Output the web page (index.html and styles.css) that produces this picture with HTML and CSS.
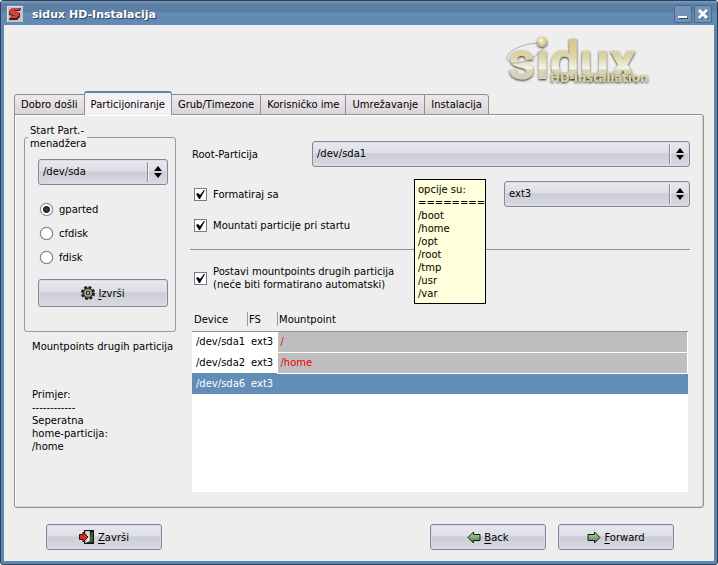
FILE: index.html
```html
<!DOCTYPE html>
<html lang="hr">
<head>
<meta charset="utf-8">
<title>sidux HD-Instalacija</title>
<link rel="stylesheet" href="styles.css">
</head>
<body>
<div class="window">
  <header class="titlebar">
    <svg class="app-icon" width="16" height="16" viewBox="0 0 16 16" aria-hidden="true">
      <rect width="16" height="16" fill="#c3c4ca"/>
      <path d="M0 16V0h16" fill="none" stroke="#e2e3e8" stroke-width="2"/>
      <path d="M2 5l3-3h9l-1 3H6l7 2v4l-3 3H2l1-3h6L2 9z" fill="#47191c"/>
      <path d="M2 4l3-2h8l-1 2H6l6 2v4l-3 2H3l1-2h4L3 8z" fill="#c8463c"/>
    </svg>
    <h1 class="title">sidux HD-Instalacija</h1>
    <button class="win-button" type="button" aria-label="Minimize">
      <svg width="18" height="18" viewBox="0 0 18 18"><path d="M5 13h9" stroke="#2f4a68" stroke-width="2"/><path d="M4 12h9" stroke="#fff" stroke-width="2"/></svg>
    </button>
    <button class="win-button" type="button" aria-label="Close">
      <svg width="18" height="18" viewBox="0 0 18 18"><path d="M6 6l8 8M14 6l-8 8" stroke="#2f4a68" stroke-width="2"/><path d="M5 5l8 8M13 5l-8 8" stroke="#fff" stroke-width="3"/></svg>
    </button>
  </header>

  <main class="content">
    <div class="banner">
      <svg class="logo" width="150" height="60" viewBox="0 0 150 60" role="img" aria-label="sidux HD-Installation">
        <defs>
          <linearGradient id="gold" x1="0" y1="8" x2="0" y2="52" gradientUnits="userSpaceOnUse">
            <stop offset="0" stop-color="#d3c88c"/><stop offset=".4" stop-color="#dcd4a4"/>
            <stop offset=".68" stop-color="#f7f4e6"/><stop offset=".7" stop-color="#d9d5b8"/><stop offset="1" stop-color="#d0cdbc"/>
          </linearGradient>
          <radialGradient id="ball" cx=".4" cy=".35"><stop offset="0" stop-color="#fffbe6"/><stop offset="1" stop-color="#d6c47c"/></radialGradient>
          <filter id="shade" x="-10%" y="-10%" width="120%" height="130%"><feDropShadow dx="0" dy="1" stdDeviation="1" flood-color="#222" flood-opacity="1"/></filter>
        </defs>
        <g filter="url(#shade)">
          <text class="wordmark" x="2" y="48" fill="url(#gold)">s&#x131;dux</text>
          <circle cx="36" cy="11" r="5" fill="url(#ball)"/>
        </g>
        <path d="M34 12C15 12-2 22 1 29c2 6 21 3 31-6 5-4 8-8 7-10" fill="none" stroke="#aaa" stroke-width="1"/>
        <text class="subtitle" x="44" y="51" filter="url(#shade)">HD-Installation</text>
      </svg>
    </div>

    <nav class="tabs" role="tablist">
      <button class="tab" role="tab" type="button">Dobro došli</button>
      <button class="tab selected" role="tab" type="button" aria-selected="true">Particijoniranje</button>
      <button class="tab" role="tab" type="button">Grub/Timezone</button>
      <button class="tab" role="tab" type="button">Korisničko ime</button>
      <button class="tab" role="tab" type="button">Umrežavanje</button>
      <button class="tab" role="tab" type="button">Instalacija</button>
    </nav>

    <section class="panel">
      <div class="side">
        <fieldset class="manager">
          <legend>Start Part.-<br>menadžera</legend>
          <div class="combo">
            <select aria-label="Disk"><option>/dev/sda</option></select>
            <svg class="arrows" width="8" height="12" viewBox="0 0 8 12"><path d="M0 5l4-5 4 5zM0 7h8l-4 5z"/></svg>
          </div>
          <div class="radios">
            <label class="choice"><input type="radio" name="tool" checked>gparted</label>
            <label class="choice"><input type="radio" name="tool">cfdisk</label>
            <label class="choice"><input type="radio" name="tool">fdisk</label>
          </div>
          <button class="button run" type="button">
            <svg width="14" height="14" viewBox="0 0 14 14"><circle cx="7" cy="7" r="5.5" fill="none" stroke="#1d1c19" stroke-width="3" stroke-dasharray="2.6 1.72"/><circle cx="7" cy="7" r="5" fill="#77746a" stroke="#1d1c19"/><circle cx="7" cy="7" r="3" fill="none" stroke="#b0ac9f"/><circle cx="7" cy="7" r="2" fill="#1d1c19"/><circle cx="7" cy="7" r="1" fill="#e8e8e8"/></svg>
            <span><u>I</u>zvrši</span>
          </button>
        </fieldset>
        <p class="note">Mountpoints drugih particija</p>
        <p class="note example">Primjer:<br>------------<br>Seperatna<br>home-particija:<br>/home</p>
      </div>

      <div class="main">
        <div class="row">
          <label class="row-label" for="root">Root-Particija</label>
          <div class="combo root">
            <select id="root"><option>/dev/sda1</option></select>
            <svg class="arrows" width="8" height="12" viewBox="0 0 8 12"><path d="M0 5l4-5 4 5zM0 7h8l-4 5z"/></svg>
          </div>
        </div>
        <div class="row format">
          <label class="choice"><input type="checkbox" checked>Formatiraj sa</label>
          <div class="combo fs">
            <select aria-label="Formatiraj sa"><option>ext3</option></select>
            <svg class="arrows" width="8" height="12" viewBox="0 0 8 12"><path d="M0 5l4-5 4 5zM0 7h8l-4 5z"/></svg>
          </div>
          <div class="tooltip" role="tooltip">opcije su:<br>========<br>/boot<br>/home<br>/opt<br>/root<br>/tmp<br>/usr<br>/var</div>
        </div>
        <label class="choice mount"><input type="checkbox" checked>Mountati particije pri startu</label>
        <hr class="rule">
        <label class="choice others"><input type="checkbox" checked><span>Postavi mountpoints drugih particija<br>(neće biti formatirano automatski)</span></label>
        <div class="list">
          <table class="mounts">
            <colgroup><col class="device"><col class="type"><col></colgroup>
            <thead><tr><th>Device</th><th>FS</th><th>Mountpoint</th></tr></thead>
            <tbody>
              <tr><td>/dev/sda1</td><td>ext3</td><td class="point">/</td></tr>
              <tr><td>/dev/sda2</td><td>ext3</td><td class="point">/home</td></tr>
              <tr class="current"><td>/dev/sda6</td><td>ext3</td><td></td></tr>
            </tbody>
          </table>
        </div>
      </div>
    </section>

    <footer class="actions">
      <button class="button" type="button">
        <svg width="16" height="14" viewBox="0 0 16 14"><path d="M5 0h10v14H5z" fill="#111"/><path d="M12 2h2v10l-4 1z" fill="#425c3a"/><path d="M6 1h5v10l-4 2H6z" fill="#bfc0ba"/><path d="M8 2h2v9l-2 1z" fill="#e4e4df"/><path d="M0.500 4.500H4V2l5 5-5 5V9.500H.5z" fill="#d52c1d" stroke="#3a0905"/></svg>
        <span><u>Z</u>avrši</span>
      </button>
      <div class="steps">
        <button class="button" type="button">
          <svg width="14" height="13" viewBox="0 0 14 13"><defs><linearGradient id="green" x1="0" y1="0" x2="0" y2="1"><stop offset="0" stop-color="#b9d6b0"/><stop offset="1" stop-color="#4c7d46"/></linearGradient></defs><path d="M1 6.500L6.500 1v2.500H13v6H6.500V12z" fill="url(#green)" stroke="#10200e"/></svg>
          <span><u>B</u>ack</span>
        </button>
        <button class="button" type="button">
          <svg width="14" height="13" viewBox="0 0 14 13"><path d="M13 6.500L7.500 1v2.500H1v6h6.500V12z" fill="url(#green)" stroke="#10200e"/></svg>
          <span><u>F</u>orward</span>
        </button>
      </div>
    </footer>
  </main>
</div>
</body>
</html>
```

FILE: styles.css
```css
* { box-sizing: border-box; }

body {
  margin: 0;
  background: #fff;
  color: #000;
  font: 10px/13px "DejaVu Sans", sans-serif;
}

button, select, input { font: inherit; color: inherit; margin: 0; }
p { margin: 0; }

.window {
  display: flex;
  flex-direction: column;
  min-height: 100vh;
  padding: 0 3px 3px;
  border: 1px solid #2b4059;
  border-radius: 3px;
  background: #5b87b3;
}

/* Title bar */
.titlebar {
  display: flex;
  align-items: center;
  gap: 2px;
  height: 24px;
  margin: 0 -3px;
  padding: 2px 5px 0 6px;
  background: linear-gradient(#7d9dbe 0, #5e80a4 3px, #5b7ea2 11px, #658bb3 12px, #618ab3 100%);
}

.title {
  flex: 1;
  margin: 0 0 0 7px;
  color: #fff;
  font-size: 11px;
  font-weight: bold;
  text-shadow: 1px 1px 1px #29415c;
}

.win-button {
  display: block;
  width: 18px;
  height: 18px;
  padding: 0;
  border: 0;
  border-radius: 2px;
  background: #7293b6;
  box-shadow: inset 0 0 0 1px #48698d;
}
.win-button svg { display: block; }

.content {
  flex: 1;
  display: flex;
  flex-direction: column;
  padding: 0 10px 11px;
  background: #eee;
}

.banner {
  display: flex;
  justify-content: flex-end;
  height: 66px;
  padding: 6px 48px 0 0;
}
.logo { overflow: visible; }
.wordmark { font: bold 53px Roboto, sans-serif; }
.subtitle { font: bold 13px "Open Sans", sans-serif; fill: #dbd29b; }

/* Tabs */
.tabs {
  display: flex;
  align-items: flex-end;
  height: 24px;
  margin-bottom: -1px;
}
.tab {
  height: 21px;
  margin-right: -1px;
  padding: 0 6px;
  border: 1px solid #909090;
  background: linear-gradient(#eee9ed, #d9d6d9);
}
.tab:first-child { border-top-left-radius: 3px; }
.tab:last-child { border-top-right-radius: 3px; }
.tab.selected {
  position: relative;
  height: 24px;
  border-top: 2px solid #5b85ad;
  border-bottom: 0;
  border-radius: 3px 3px 0 0;
  background: #f4f1f5;
}

.panel {
  flex: 1;
  display: flex;
  gap: 16px;
  padding: 10px 13px 15px 9px;
  border: 1px solid #909090;
  border-radius: 0 3px 3px 3px;
  box-shadow: inset 1px 1px #fff, inset -1px -1px #d6d6d6;
}

.side { flex: 0 0 152px; margin-top: -1px; }

.manager {
  min-width: 0;
  height: 208px;
  margin: 0;
  padding: 9px 7px 0 13px;
  border: 1px solid #989898;
  border-radius: 3px;
}
.manager legend { margin-left: -10px; padding: 0 1px 0 2px; }

.note { padding: 8px 0 0 8px; }
.example { padding-top: 35px; }

/* Drop-downs */
.combo { position: relative; }
.combo select {
  display: block;
  width: 100%;
  height: 26px;
  padding: 0 24px 2px 4px;
  border: 1px solid #83869b;
  border-radius: 3px;
  appearance: none;
  background: linear-gradient(#e8e8ef, #dedfe6 45%, #cbccd5 50%, #d9dbe1);
  box-shadow: inset 0 0 0 1px #dcdce6;
}
.combo::after {
  content: "";
  position: absolute;
  top: 3px;
  right: 19px;
  bottom: 3px;
  border-left: 1px solid #888a96;
  border-right: 1px solid #f4f4f8;
}
.arrows { position: absolute; top: 7px; right: 6px; pointer-events: none; }

/* Radios and tick boxes */
.choice { display: flex; align-items: center; gap: 6px; }
.choice input {
  appearance: none;
  flex: none;
  width: 13px;
  height: 13px;
  border: 1px solid #777b8e;
  background: #fff;
}
.choice input[type="radio"] { border-radius: 50%; box-shadow: 0 0 1px #777b8e; }
.choice input[type="radio"]:checked {
  background: radial-gradient(circle, #444 0, #222 3px, #fff 4px);
}
.choice input[type="checkbox"]:checked {
  background: #fff url("data:image/svg+xml,%3Csvg xmlns='http://www.w3.org/2000/svg' viewBox='0 0 11 11'%3E%3Cpath d='M1 5l2-1 2 2 4-5h1L5 10H4z'/%3E%3C/svg%3E") center / 11px;
}
.radios { display: grid; gap: 11px; margin: 18px 0 15px 2px; }

.button {
  display: flex;
  align-items: center;
  justify-content: center;
  gap: 3px;
  width: 116px;
  height: 26px;
  padding: 0;
  border: 1px solid #83869b;
  border-radius: 3px;
  background: linear-gradient(#e8e8ef, #dedfe6 45%, #cbccd5 50%, #d9dbe1);
  box-shadow: inset 0 0 0 1px #dcdce6;
}
.button.run { width: 100%; height: 28px; }
.button u { text-underline-offset: 2px; }

/* Partition settings */
.main {
  flex: 1;
  display: flex;
  flex-direction: column;
  min-width: 0;
  padding-top: 16px;
}
.row { display: flex; align-items: center; }
.row-label { flex: 0 0 120px; }
.root { flex: 1; }
.format { position: relative; justify-content: space-between; margin-top: 14px; padding-left: 2px; }
.fs { width: 186px; }
.mount { margin: 12px 0 0 2px; }
.rule { width: calc(100% + 2px); height: 1px; margin: 17px 0 0 -2px; border: 0; background: #909090; }
.others { margin: 15px 0 0 2px; }

.tooltip {
  position: absolute;
  z-index: 1;
  top: -2px;
  right: 204px;
  width: 72px;
  padding: 3px;
  border: 1px solid #000;
  background: #ffffdc;
}

.list {
  flex: 1;
  margin: 20px 2px 0 0;
  background: linear-gradient(#eee 20px, #fff 20px);
}
.mounts { width: 100%; border-collapse: collapse; table-layout: fixed; }
.device { width: 55px; }
.type { width: 30px; }
.mounts th {
  height: 20px;
  padding: 0 2px 2px;
  font-weight: normal;
  text-align: left;
  border-bottom: 1px solid #909090;
  background: linear-gradient(#999, #999) left top 1px / 1px 14px no-repeat;
}
.mounts th:first-child { background: none; }
.mounts td { height: 21px; padding: 0 4px; white-space: nowrap; }
.mounts .point {
  padding-left: 3px;
  border: 1px solid #fff;
  background: #bebebe;
  color: #f00000;
}
.current { background: #628db6; color: #fff; }

/* Bottom buttons */
.actions {
  display: flex;
  justify-content: space-between;
  padding: 16px 30px 0 32px;
}
.steps { display: flex; gap: 12px; }
```
